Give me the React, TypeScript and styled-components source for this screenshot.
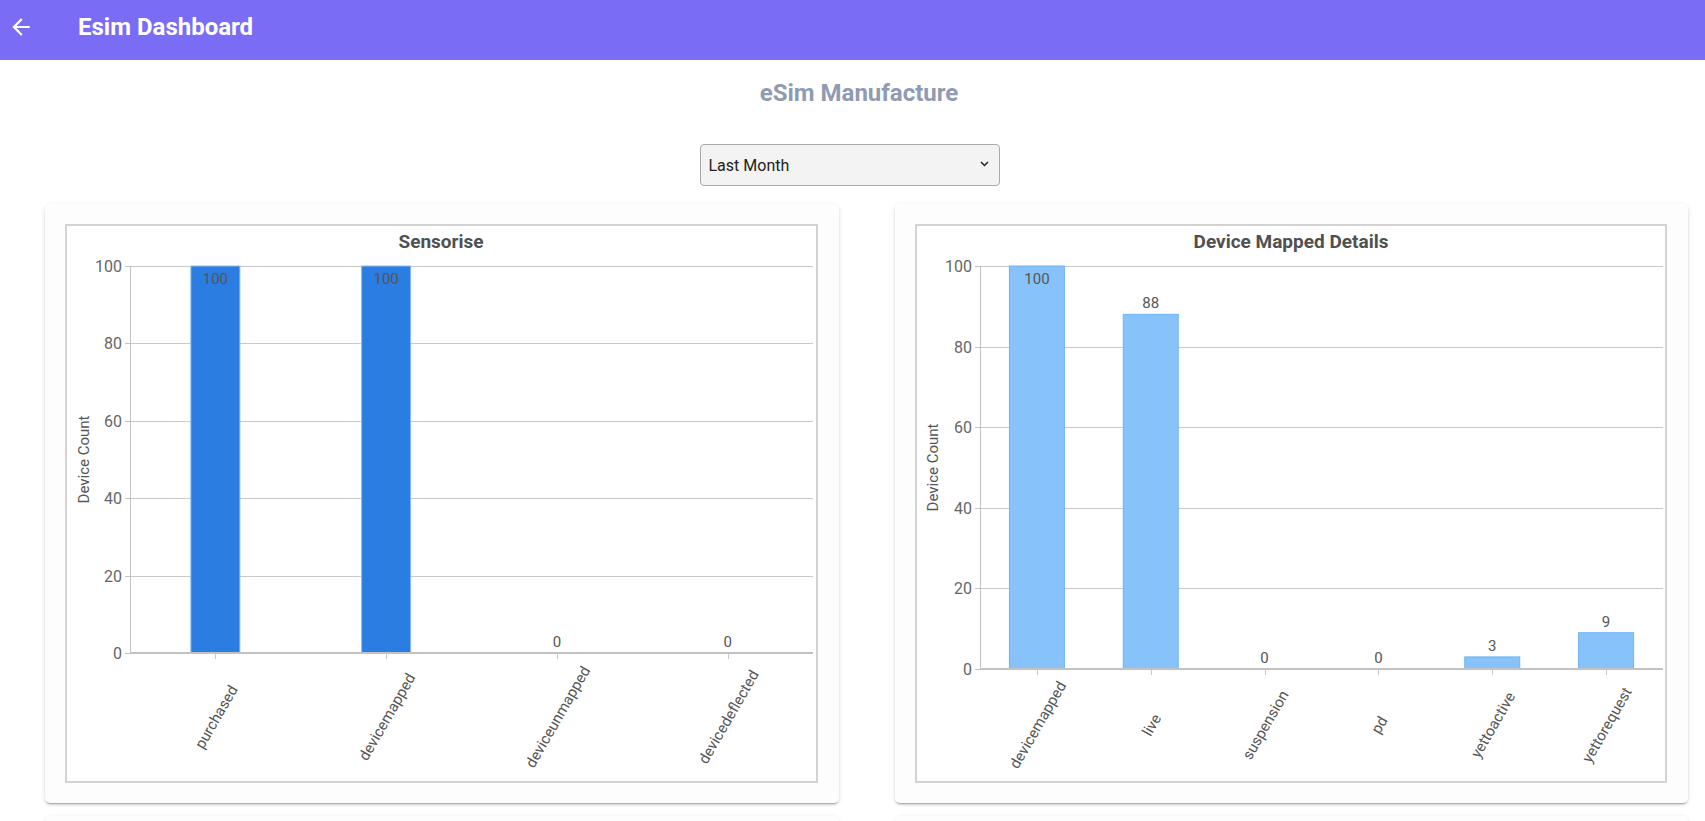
import React from "react";
import styled, { createGlobalStyle } from "styled-components";

const GlobalStyle = createGlobalStyle`
  html, body {
    margin: 0;
    padding: 0;
    background: #ffffff;
    overflow: hidden;
  }
  body {
    font-family: Roboto, "Liberation Sans", Arial, sans-serif;
  }
  *, *::before, *::after {
    box-sizing: border-box;
  }
`;

const Page = styled.div`
  display: flex;
  flex-direction: column;
  height: 100vh;
  overflow: hidden;
`;

const TopBar = styled.header`
  flex-shrink: 0;
  height: 60px;
  background: #7b6cf6;
  color: #ffffff;
  display: flex;
  align-items: center;
  padding: 0 0 7px 8px;
`;

const BackButton = styled.button`
  width: 26px;
  height: 26px;
  padding: 0;
  border: 0;
  background: transparent;
  color: #ffffff;
  display: flex;
  cursor: pointer;
  svg {
    width: 26px;
    height: 26px;
    display: block;
  }
`;

const BarTitle = styled.h1`
  margin: 0 0 0 44px;
  font-size: 24px;
  line-height: 28px;
  font-weight: 700;
`;

const PageHeading = styled.h2`
  margin: 19px 0 0;
  padding-left: 13px;
  text-align: center;
  font-size: 24px;
  line-height: 28px;
  font-weight: 700;
  color: #8e9bb2;
`;

const FilterRow = styled.div`
  display: flex;
  justify-content: center;
  margin-top: 37px;
  padding-right: 6px;
`;

const SelectWrap = styled.div`
  position: relative;
  width: 300px;
  height: 42px;
`;

const PeriodSelect = styled.select`
  appearance: none;
  -webkit-appearance: none;
  width: 100%;
  height: 100%;
  background: #f3f3f3;
  border: 1px solid #a9a9a9;
  border-radius: 4px;
  padding: 0 28px 0 8px;
  font-family: Roboto, "Liberation Sans", Arial, sans-serif;
  font-size: 16px;
  color: #222222;
  outline: none;
`;

const Chevron = styled.svg`
  position: absolute;
  right: 11px;
  top: 17px;
  width: 9px;
  height: 6px;
  pointer-events: none;
`;

const CardGrid = styled.div`
  display: grid;
  grid-template-columns: 1fr 1fr;
  column-gap: 56px;
  row-gap: 13px;
  padding: 0 17px 0 45px;
  margin-top: 18px;
`;

const Card = styled.section`
  height: 599px;
  background: #fdfdfd;
  border-radius: 5px;
  box-shadow: 0 3px 1px -2px rgba(0, 0, 0, 0.18), 0 2px 2px 0 rgba(0, 0, 0, 0.12),
    0 1px 5px 0 rgba(0, 0, 0, 0.1);
  padding: 20px 21px 20px 20px;
`;

const ChartFrame = styled.div`
  height: 559px;
  border: 2px solid #d3d3d3;
  background: #ffffff;
  overflow: hidden;
`;

const ChartSvg = styled.svg`
  display: block;
  font-family: Roboto, "Liberation Sans", Arial, sans-serif;
`;

type Datum = { label: string; value: number };

type ChartProps = {
  title: string;
  data: Datum[];
  barColor: string;
  barStroke: string;
  barWidth: number;
  plotBottom: number;
  labelCenterY: number;
  axisTitleX: number;
};

const PLOT_LEFT = 63;
const PLOT_RIGHT = 746;
const PLOT_TOP = 40;
const TICKS = [0, 20, 40, 60, 80, 100];

function BarChart({
  title,
  data,
  barColor,
  barStroke,
  barWidth,
  plotBottom,
  labelCenterY,
  axisTitleX,
}: ChartProps) {
  const plotH = plotBottom - PLOT_TOP;
  const band = (PLOT_RIGHT - PLOT_LEFT) / data.length;
  const yOf = (v: number) => plotBottom - (v / 100) * plotH;

  return (
    <ChartSvg width={748} height={555} viewBox="0 0 748 555">
      <text x={374} y={22} textAnchor="middle" fontSize={19} fontWeight={700} fill="#505050">
        {title}
      </text>

      {TICKS.map((t) => {
        const y = Math.round(yOf(t)) + 0.5;
        return (
          <g key={t}>
            {t > 0 && (
              <line x1={PLOT_LEFT} x2={PLOT_RIGHT} y1={y} y2={y} stroke="#c9c9c9" strokeWidth={1} />
            )}
            <line x1={PLOT_LEFT - 5} x2={PLOT_LEFT} y1={y} y2={y} stroke="#c2c2c2" strokeWidth={1} />
            <text x={PLOT_LEFT - 8} y={y + 5.5} textAnchor="end" fontSize={16} fill="#666666">
              {t}
            </text>
          </g>
        );
      })}

      <text
        transform={`translate(${axisTitleX} ${(PLOT_TOP + plotBottom) / 2}) rotate(-90)`}
        textAnchor="middle"
        dominantBaseline="central"
        fontSize={15}
        fill="#555555"
      >
        Device Count
      </text>

      <line
        x1={PLOT_LEFT + 0.5}
        x2={PLOT_LEFT + 0.5}
        y1={PLOT_TOP}
        y2={plotBottom}
        stroke="#c2c2c2"
        strokeWidth={1}
      />

      {data.map((d, i) => {
        const cx = PLOT_LEFT + band * (i + 0.5);
        const top = yOf(d.value);
        const inside = top - 20 < PLOT_TOP;
        return (
          <g key={d.label}>
            {d.value > 0 && (
              <rect
                x={cx - barWidth / 2}
                y={top}
                width={barWidth}
                height={plotBottom - top}
                fill={barColor}
                stroke={barStroke}
                strokeWidth={1}
              />
            )}
            <text
              x={cx}
              y={inside ? top + 18 : top - 6}
              textAnchor="middle"
              fontSize={15}
              fill="#555555"
            >
              {d.value}
            </text>
            <line
              x1={Math.round(cx) + 0.5}
              x2={Math.round(cx) + 0.5}
              y1={plotBottom}
              y2={plotBottom + 6}
              stroke="#c9c9c9"
              strokeWidth={1}
            />
            <text
              transform={`translate(${cx + 1} ${labelCenterY}) rotate(-60)`}
              textAnchor="middle"
              dominantBaseline="central"
              fontSize={15}
              fill="#555555"
            >
              {d.label}
            </text>
          </g>
        );
      })}

      <line
        x1={PLOT_LEFT}
        x2={PLOT_RIGHT}
        y1={plotBottom}
        y2={plotBottom}
        stroke="#c2c2c2"
        strokeWidth={2}
      />
    </ChartSvg>
  );
}

const sensorise: Datum[] = [
  { label: "purchased", value: 100 },
  { label: "devicemapped", value: 100 },
  { label: "deviceunmapped", value: 0 },
  { label: "devicedeflected", value: 0 },
];

const mapped: Datum[] = [
  { label: "devicemapped", value: 100 },
  { label: "live", value: 88 },
  { label: "suspension", value: 0 },
  { label: "pd", value: 0 },
  { label: "yettoactive", value: 3 },
  { label: "yettorequest", value: 9 },
];

export default function App() {
  return (
    <>
      <GlobalStyle />
      <Page>
        <TopBar>
          <BackButton aria-label="Back">
            <svg viewBox="0 0 24 24" fill="currentColor">
              <path d="M20 11H7.83l5.59-5.59L12 4l-8 8 8 8 1.41-1.41L7.83 13H20v-2z" />
            </svg>
          </BackButton>
          <BarTitle>Esim Dashboard</BarTitle>
        </TopBar>

        <PageHeading>eSim Manufacture</PageHeading>

        <FilterRow>
          <SelectWrap>
            <PeriodSelect defaultValue="lastMonth">
              <option value="lastWeek">Last Week</option>
              <option value="lastMonth">Last Month</option>
              <option value="lastYear">Last Year</option>
            </PeriodSelect>
            <Chevron viewBox="0 0 9 6">
              <polyline points="1,1 4.5,4.5 8,1" fill="none" stroke="#222" strokeWidth={1.5} />
            </Chevron>
          </SelectWrap>
        </FilterRow>

        <CardGrid>
          <Card>
            <ChartFrame>
              <BarChart
                title="Sensorise"
                data={sensorise}
                barColor="#2a7de1"
                barStroke="#8fb9ec"
                barWidth={49}
                plotBottom={427}
                labelCenterY={491}
                axisTitleX={17}
              />
            </ChartFrame>
          </Card>
          <Card>
            <ChartFrame>
              <BarChart
                title="Device Mapped Details"
                data={mapped}
                barColor="#87c2fb"
                barStroke="#6fb3f5"
                barWidth={55}
                plotBottom={443}
                labelCenterY={499}
                axisTitleX={16}
              />
            </ChartFrame>
          </Card>
          <Card>
            <ChartFrame />
          </Card>
          <Card>
            <ChartFrame />
          </Card>
        </CardGrid>
      </Page>
    </>
  );
}
